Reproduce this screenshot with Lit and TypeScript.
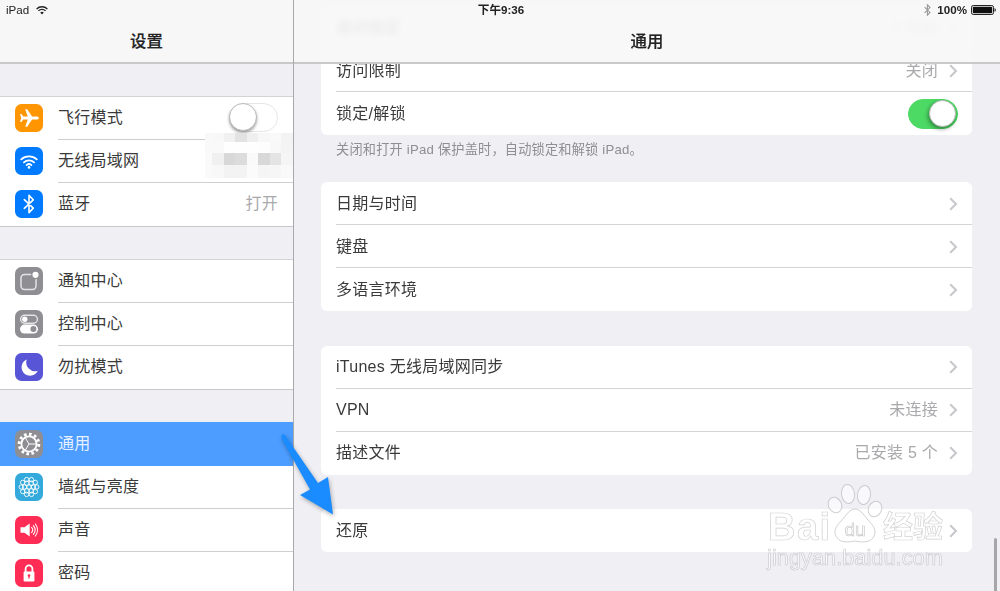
import { LitElement, html, css, svg } from "lit";
import { customElement } from "lit/decorators.js";

const I: Record<string, unknown> = {
  plane: svg`<path fill="#fff" d="M23.8 14c0-.9-1-1.6-2.3-1.6h-4.4L12.2 5.2h-2l2.5 7.2H8.3L6.4 10H5.1l1 4-1 4h1.3l1.9-2.4h4.4l-2.5 7.2h2l4.9-7.2h4.4c1.3 0 2.3-.7 2.3-1.6z"/>`,
  wifi: svg`<g fill="none" stroke="#fff" stroke-width="1.8" stroke-linecap="round"><path d="M6.2 12.4a11.4 11.4 0 0 1 15.6 0"/><path d="M8.9 15.3a7.6 7.6 0 0 1 10.2 0"/><path d="M11.6 18.1a3.6 3.6 0 0 1 4.8 0"/></g><circle cx="14" cy="20.4" r="1.3" fill="#fff"/>`,
  bt: svg`<path fill="none" stroke="#fff" stroke-width="1.6" stroke-linejoin="round" stroke-linecap="round" d="M9.3 9.6l9 8.5-4.3 4.5V5.4l4.3 4.4-9 8.6"/>`,
  notif: svg`<rect x="6" y="7.5" width="15" height="15" rx="3.4" fill="none" stroke="#e4e4e6" stroke-width="1.5"/><circle cx="20.5" cy="7.8" r="4.4" fill="#8e8e93"/><circle cx="20.5" cy="7.8" r="3.1" fill="#fff"/>`,
  ctrl: svg`<rect x="5.6" y="5.2" width="16.8" height="8" rx="4" fill="none" stroke="#e4e4e6" stroke-width="1.4"/><circle cx="9.8" cy="9.2" r="2.7" fill="#fff"/><rect x="5" y="14.6" width="18" height="9" rx="4.5" fill="#fff"/><circle cx="18.4" cy="19.1" r="3" fill="#8e8e93"/>`,
  moon: svg`<path fill="#fff" d="M11.8 6.4a8.5 8.5 0 1 0 11 11.4 8.8 8.8 0 0 1-11-11.4z"/>`,
  gear: svg`<circle cx="14" cy="14" r="9.8" fill="none" stroke="#fff" stroke-width="3" stroke-dasharray="2.6 2.5"/><circle cx="14" cy="14" r="7.6" fill="none" stroke="#fff" stroke-width="1.8"/><g stroke="#fff" stroke-width="1"><path d="M14 14h7.5M14 14l-3.8 -6.5M14 14l-3.8 6.5"/></g>`,
  flower: svg`<g fill="none" stroke="#fff" stroke-width=".9"><circle cx="14" cy="14" r="2.2"/>${[0, 1, 2, 3, 4, 5].map(
    (i) => svg`<circle cx=${14 + 4.4 * Math.cos((i * Math.PI) / 3)} cy=${14 + 4.4 * Math.sin((i * Math.PI) / 3)} r="2.2"/>`
  )}${[0, 1, 2, 3, 4, 5, 6, 7, 8, 9].map(
    (i) => svg`<circle cx=${14 + 7.8 * Math.cos((i * Math.PI) / 5)} cy=${14 + 7.8 * Math.sin((i * Math.PI) / 5)} r="2.2"/>`
  )}</g>`,
  sound: svg`<path fill="#fff" d="M5.5 11.2h4l5.2-3.8v13.2l-5.2-3.8h-4z"/><g fill="none" stroke="#fff" stroke-width="1.1" stroke-linecap="round"><path d="M16.6 11.4a4 4 0 0 1 0 5.2"/><path d="M18.4 9.6a7 7 0 0 1 0 8.8"/><path d="M20.4 8a10 10 0 0 1 0 12"/></g>`,
  lock: svg`<path fill="none" stroke="#fff" stroke-width="1.8" d="M10.6 13V9.8a3.4 3.4 0 0 1 6.8 0V13"/><rect x="8.6" y="12.4" width="10.8" height="10" rx="1.2" fill="#fff"/><circle cx="14" cy="16.6" r="1.3" fill="#ff2d55"/><rect x="13.4" y="16.6" width="1.2" height="3" fill="#ff2d55"/>`,
};

type LeftRow = { icon: string; bg: string; label: string; value?: string; toggle?: boolean; sel?: boolean };
const leftGroups: LeftRow[][] = [
  [
    { icon: "plane", bg: "#ff9500", label: "飞行模式", toggle: true },
    { icon: "wifi", bg: "#007aff", label: "无线局域网" },
    { icon: "bt", bg: "#007aff", label: "蓝牙", value: "打开" },
  ],
  [
    { icon: "notif", bg: "#8e8e93", label: "通知中心" },
    { icon: "ctrl", bg: "#8e8e93", label: "控制中心" },
    { icon: "moon", bg: "#5856d6", label: "勿扰模式" },
  ],
  [
    { icon: "gear", bg: "#8e8e93", label: "通用", sel: true },
    { icon: "flower", bg: "#34aadc", label: "墙纸与亮度" },
    { icon: "sound", bg: "#ff2d55", label: "声音" },
    { icon: "lock", bg: "#ff2d55", label: "密码" },
  ],
];

type RightRow = { label: string; value?: string; toggle?: boolean };
const pixels = [
  ["f9", "f8", "f1", "e2", "ef", "f7", "f9", "f3"],
  ["f9", "f9", "fe", "fe", "fe", "fd", "f8", "f4"],
  ["fa", "f0", "d8", "dc", "fa", "d8", "e4", "f5"],
  ["fa", "f8", "f3", "f3", "fb", "f5", "f6", "f9"],
];

const chevron = html`<svg class="chev" width="9" height="14" viewBox="0 0 9 14"><path d="M1.2 1.2L7 7l-5.8 5.8" fill="none" stroke="#c7c7cc" stroke-width="2"/></svg>`;

@customElement("app-root")
export class AppRoot extends LitElement {
  static styles = css`
    :host {
      display: block;
      width: 1000px;
      height: 591px;
      overflow: hidden;
      position: relative;
      background: #efeff4;
      font-family: "Liberation Sans", "Noto Sans CJK SC", sans-serif;
      font-size: 16px;
      line-height: 20px;
      color: #3a3a3a;
    }
    .screen { display: flex; width: 1000px; height: 591px; position: relative; filter: blur(0.4px); }
    .left { width: 293px; flex: none; border-right: 1px solid #a9a9ac; display: flex; flex-direction: column; background: #efeff4; overflow: hidden; }
    .lhead { height: 62px; flex: none; box-sizing: content-box; background: #f7f7f7; border-bottom: 2px solid #c9c9cc; display: flex; align-items: flex-end; justify-content: center; }
    .title { font-size: 16.4px; line-height: 20px; padding-bottom: 11px; color: #222; font-weight: 500; -webkit-text-stroke: 0.2px #222; }
    .lgroup { margin-top: 32px; background: #fff; border-top: 1px solid #d3d3d6; border-bottom: 1px solid #c8c7cc; flex: none; }
    .lrow { height: 43px; box-sizing: border-box; display: flex; align-items: center; position: relative; padding: 0 15px 2px; }
    .lrow.sel { background: #4c9dff; color: #e6f0ff; box-shadow: 0 -1px 0 #4c9dff; }
    .lrow .lbl { margin-left: 15px; flex: 1; letter-spacing: 0.25px; }
    .lrow.sep::after { content: ""; position: absolute; left: 58px; right: 0; bottom: 0; height: 1px; background: #cfcfd2; }
    .icon { width: 28px; height: 28px; border-radius: 6.5px; flex: none; display: block; }
    .val { color: #a9a9ac; letter-spacing: 0.25px; }
    .toggle { width: 49px; height: 29px; border-radius: 15px; box-sizing: border-box; border: 1.5px solid #e6e6e6; background: #fff; position: relative; flex: none; }
    .knob { position: absolute; left: -1px; top: -1.5px; width: 28px; height: 28px; border-radius: 50%; background: #fff; border: 0.5px solid #bbb; box-shadow: 0 2px 3px rgba(0, 0, 0, 0.35); box-sizing: border-box; }
    .toggle.on { width: 50px; height: 30px; background: #4cd964; border-color: #4cd964; }
    .toggle.on .knob { left: 20px; top: 0; box-shadow: -1px 2px 4px rgba(0, 0, 0, 0.4); width: 27px; height: 27px; }

    .right { flex: 1; padding: 6px 28px 0 27px; min-width: 0; }
    .card { background: #fff; border-radius: 6px; }
    .card.g35 { margin-bottom: 34.5px; }
    .card.g34 { margin-bottom: 34.5px; }
    .rrow { height: 43px; box-sizing: border-box; display: flex; align-items: center; padding: 0 14px 0 15px; position: relative; }
    .rrow.sep::after { content: ""; position: absolute; left: 15px; right: 0; bottom: 0; height: 1px; background: #d4d4d7; }
    .rlbl { flex: 1; letter-spacing: 0.25px; }
    .rrow .val { margin-right: 11px; }
    .chev { flex: none; }
    .note { font-size: 13.2px; line-height: 16px; color: #8e8e93; padding: 7px 15px 0; height: 47px; box-sizing: border-box; letter-spacing: 0.2px; white-space: nowrap; }

    .rhead { position: absolute; left: 294px; top: 0; right: 0; height: 62px; box-sizing: content-box; background: rgba(247, 247, 247, 0.9); backdrop-filter: blur(3px); border-bottom: 2px solid #c9c9cc; display: flex; align-items: flex-end; justify-content: center; }
    .status { position: absolute; left: 0; right: 0; top: 0; height: 20px; display: grid; grid-template-columns: 1fr auto 1fr; align-items: center; padding: 0 4px 0 6px; font-size: 11.6px; color: #222; }
    .s-l { display: flex; align-items: center; gap: 7px; }
    .s-c { font-weight: 700; }
    .s-r { display: flex; align-items: center; justify-content: flex-end; font-weight: 700; }
    .s-r .pct { margin: 0 4px 0 6px; }
    .scroll { position: absolute; left: 994px; top: 538px; width: 3px; height: 53px; background: #a6a6a8; border-radius: 2px 2px 0 0; }
    .mosaic { position: absolute; left: 205px; top: 133px; width: 88px; height: 45px; display: grid; grid-template-columns: 7.3px repeat(7, 11.53px); grid-template-rows: 8.5px 11.7px 11.7px 13px; }
    .arrow { position: absolute; left: 270px; top: 425px; filter: drop-shadow(1px 2px 2px rgba(0, 0, 0, 0.3)); }
    .mark { position: absolute; left: 765px; top: 482px; width: 190px; height: 92px; color: rgba(255, 255, 255, 0.6); -webkit-text-stroke: 0.7px rgba(165, 165, 170, 0.5); }
    .mark span { position: absolute; white-space: nowrap; }
    .m-bai { left: 3px; top: 25px; font-size: 38px; line-height: 40px; font-weight: 700; letter-spacing: 1.5px; }
    .m-zh { left: 118px; top: 29px; font-size: 30px; line-height: 32px; font-weight: 700; }
    .m-url { left: 2px; top: 63px; font-size: 21.6px; line-height: 26px; letter-spacing: 0.1px; }
    .paw { position: absolute; left: 60px; top: 0; }
  `;

  private icon(r: LeftRow) {
    return html`<svg class="icon" style="background:${r.bg}" viewBox="0 0 28 28">${I[r.icon]}</svg>`;
  }

  private rrow(r: RightRow, last: boolean) {
    return html`<div class="rrow ${last ? "" : "sep"}">
      <span class="rlbl">${r.label}</span>
      ${r.toggle
        ? html`<div class="toggle on"><div class="knob"></div></div>`
        : html`${r.value ? html`<span class="val">${r.value}</span>` : ""}${chevron}`}
    </div>`;
  }

  private card(rows: RightRow[], cls = "") {
    return html`<div class="card ${cls}">${rows.map((r, i) => this.rrow(r, i === rows.length - 1))}</div>`;
  }

  render() {
    return html`<div class="screen">
      <div class="left">
        <div class="lhead"><span class="title">设置</span></div>
        ${leftGroups.map(
          (g) => html`<div class="lgroup">
            ${g.map(
              (r, i) => html`<div class="lrow ${r.sel ? "sel" : ""} ${i < g.length - 1 && !r.sel ? "sep" : ""}">
                ${this.icon(r)}
                <span class="lbl">${r.label}</span>
                ${r.value ? html`<span class="val">${r.value}</span>` : ""}
                ${r.toggle ? html`<div class="toggle"><div class="knob"></div></div>` : ""}
              </div>`
            )}
          </div>`
        )}
      </div>
      <div class="right">
        ${this.card([{ label: "自动锁定", value: "2 分钟" }, { label: "访问限制", value: "关闭" }, { label: "锁定/解锁", toggle: true }])}
        <div class="note">关闭和打开 iPad 保护盖时\uFF0C自动锁定和解锁 iPad。</div>
        ${this.card([{ label: "日期与时间" }, { label: "键盘" }, { label: "多语言环境" }], "g35")}
        ${this.card([{ label: "iTunes 无线局域网同步" }, { label: "VPN", value: "未连接" }, { label: "描述文件", value: "已安装 5 个" }], "g34")}
        ${this.card([{ label: "还原" }])}
      </div>
      <div class="rhead"><span class="title">通用</span></div>
      <div class="status">
        <div class="s-l">
          <span>iPad</span>
          <svg width="12" height="9" viewBox="0 0 12 9"><g fill="none" stroke="#222" stroke-width="1.3"><path d="M.6 3a7.6 7.6 0 0 1 10.8 0"/><path d="M2.4 4.9a5 5 0 0 1 7.2 0"/></g><path d="M4.2 6.6a2.6 2.6 0 0 1 3.6 0L6 8.6z" fill="#222"/></svg>
        </div>
        <div class="s-c">下午9:36</div>
        <div class="s-r">
          <svg width="7" height="12" viewBox="0 0 7 12"><path fill="none" stroke="#999" stroke-width="1.1" d="M.6 3.2l5.4 5.2-2.6 2.8V.8L6 3.6.6 8.8"/></svg>
          <span class="pct">100%</span>
          <svg width="25" height="10" viewBox="0 0 25 10"><rect x=".5" y=".5" width="22" height="9" rx="1.8" fill="none" stroke="#222"/><rect x="1.8" y="1.8" width="19.4" height="6.4" rx=".8" fill="#111"/><path d="M23.5 3.2c1 .2 1.3.8 1.3 1.8s-.3 1.6-1.3 1.8z" fill="#222"/></svg>
        </div>
      </div>
      <div class="mosaic">
        ${pixels.flat().map((c) => html`<div style="background:#${c}${c}${c}"></div>`)}
      </div>
      <div class="scroll"></div>
      <div class="mark">
        <svg class="paw" width="64" height="66" viewBox="0 0 64 66">
          <g fill="rgba(255,255,255,.6)" stroke="rgba(165,165,170,.5)" stroke-width="1">
            <ellipse cx="10" cy="23" rx="6.5" ry="8" transform="rotate(-25 10 23)"/>
            <ellipse cx="23" cy="12" rx="6.5" ry="9.5" transform="rotate(-8 23 12)"/>
            <ellipse cx="39" cy="13" rx="6.5" ry="9.5" transform="rotate(8 39 13)"/>
            <ellipse cx="50" cy="27" rx="6.5" ry="8" transform="rotate(25 50 27)"/>
            <path d="M30 27c5 0 8 5 13 11 5 5 9 10 6 16-3 6-9 7-19 5-10 2-16 1-19-5-3-6 1-11 6-16 5-6 8-11 13-11z"/>
          </g>
          <text x="30" y="54" text-anchor="middle" font-family="Liberation Sans" font-size="19" fill="rgba(255,255,255,.7)" stroke="rgba(165,165,170,.7)" stroke-width=".6">du</text>
        </svg>
        <span class="m-bai">Bai</span>
        <span class="m-zh">经验</span>
        <span class="m-url">jingyan.baidu.com</span>
      </div>
      <svg class="arrow" width="70" height="96" viewBox="270 425 70 96">
        <path fill="#1a8cff" d="M281.5 435.5c.8-1.4 2.2-1.6 3.4-.4L318 483l10-6 5 37.5-33-19.5 10-5.5-28.4-50.8z"/>
      </svg>
    </div>`;
  }
}
